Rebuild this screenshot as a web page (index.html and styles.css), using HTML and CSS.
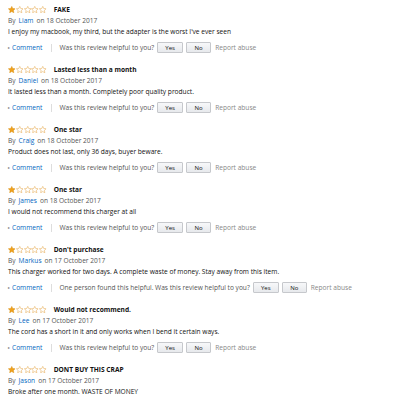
FILE: index.html
```html
<!DOCTYPE html>
<html>
<head>
<meta charset="utf-8">
<link rel="stylesheet" href="styles.css">
</head>
<body>
<svg width="0" height="0" class="defs">
  <defs>
    <symbol id="star" viewBox="0 0 20 20"><path d="M10 1l2.7 5.7 6.3.7-4.7 4.3 1.3 6.3L10 14.8 4.4 18l1.3-6.3L1 7.4l6.3-.7z"/></symbol>
  </defs>
</svg>

<div class="review">
  <div class="head"><span class="stars"><svg class="s full"><use href="#star"/></svg><svg class="s"><use href="#star"/></svg><svg class="s"><use href="#star"/></svg><svg class="s"><use href="#star"/></svg><svg class="s"><use href="#star"/></svg></span><span class="title">FAKE</span></div>
  <div class="by">By <a class="link">Liam</a> on 18 October 2017</div>
  <div class="text">I enjoy my macbook, my third, but the adapter is the worst I've ever seen</div>
  <div class="actions"><span class="arrow">▸</span><a class="link">Comment</a><span class="sep"></span><span class="q">Was this review helpful to you?</span><span class="btn">Yes</span><span class="btn">No</span><span class="abuse">Report abuse</span></div>
</div>

<div class="review">
  <div class="head"><span class="stars"><svg class="s full"><use href="#star"/></svg><svg class="s"><use href="#star"/></svg><svg class="s"><use href="#star"/></svg><svg class="s"><use href="#star"/></svg><svg class="s"><use href="#star"/></svg></span><span class="title">Lasted less than a month</span></div>
  <div class="by">By <a class="link">Daniel</a> on 18 October 2017</div>
  <div class="text">It lasted less than a month. Completely poor quality product.</div>
  <div class="actions"><span class="arrow">▸</span><a class="link">Comment</a><span class="sep"></span><span class="q">Was this review helpful to you?</span><span class="btn">Yes</span><span class="btn">No</span><span class="abuse">Report abuse</span></div>
</div>

<div class="review">
  <div class="head"><span class="stars"><svg class="s full"><use href="#star"/></svg><svg class="s"><use href="#star"/></svg><svg class="s"><use href="#star"/></svg><svg class="s"><use href="#star"/></svg><svg class="s"><use href="#star"/></svg></span><span class="title">One star</span></div>
  <div class="by">By <a class="link">Craig</a> on 18 October 2017</div>
  <div class="text">Product does not last, only 36 days, buyer beware.</div>
  <div class="actions"><span class="arrow">▸</span><a class="link">Comment</a><span class="sep"></span><span class="q">Was this review helpful to you?</span><span class="btn">Yes</span><span class="btn">No</span><span class="abuse">Report abuse</span></div>
</div>

<div class="review">
  <div class="head"><span class="stars"><svg class="s full"><use href="#star"/></svg><svg class="s"><use href="#star"/></svg><svg class="s"><use href="#star"/></svg><svg class="s"><use href="#star"/></svg><svg class="s"><use href="#star"/></svg></span><span class="title">One star</span></div>
  <div class="by">By <a class="link">James</a> on 18 October 2017</div>
  <div class="text">I would not recommend this charger at all</div>
  <div class="actions"><span class="arrow">▸</span><a class="link">Comment</a><span class="sep"></span><span class="q">Was this review helpful to you?</span><span class="btn">Yes</span><span class="btn">No</span><span class="abuse">Report abuse</span></div>
</div>

<div class="review">
  <div class="head"><span class="stars"><svg class="s full"><use href="#star"/></svg><svg class="s"><use href="#star"/></svg><svg class="s"><use href="#star"/></svg><svg class="s"><use href="#star"/></svg><svg class="s"><use href="#star"/></svg></span><span class="title">Don't purchase</span></div>
  <div class="by">By <a class="link">Markus</a> on 17 October 2017</div>
  <div class="text">This charger worked for two days. A complete waste of money. Stay away from this item.</div>
  <div class="actions"><span class="arrow">▸</span><a class="link">Comment</a><span class="sep"></span><span class="q">One person found this helpful. Was this review helpful to you?</span><span class="btn">Yes</span><span class="btn">No</span><span class="abuse">Report abuse</span></div>
</div>

<div class="review">
  <div class="head"><span class="stars"><svg class="s full"><use href="#star"/></svg><svg class="s"><use href="#star"/></svg><svg class="s"><use href="#star"/></svg><svg class="s"><use href="#star"/></svg><svg class="s"><use href="#star"/></svg></span><span class="title">Would not recommend.</span></div>
  <div class="by">By <a class="link">Lee</a> on 17 October 2017</div>
  <div class="text">The cord has a short in it and only works when I bend it certain ways.</div>
  <div class="actions"><span class="arrow">▸</span><a class="link">Comment</a><span class="sep"></span><span class="q">Was this review helpful to you?</span><span class="btn">Yes</span><span class="btn">No</span><span class="abuse">Report abuse</span></div>
</div>

<div class="review">
  <div class="head"><span class="stars"><svg class="s full"><use href="#star"/></svg><svg class="s"><use href="#star"/></svg><svg class="s"><use href="#star"/></svg><svg class="s"><use href="#star"/></svg><svg class="s"><use href="#star"/></svg></span><span class="title">DONT BUY THIS CRAP</span></div>
  <div class="by">By <a class="link">Jason</a> on 17 October 2017</div>
  <div class="text">Broke after one month. WASTE OF MONEY</div>
</div>
</body>
</html>
```

FILE: styles.css
```css
html, body {
  margin: 0;
  padding: 0;
  background: #fff;
}
body {
  padding: 4px 0 0 8px;
  font-family: "Open Sans", "Noto Sans", sans-serif;
  font-size: 6.6px;
  color: #111;
  overflow: hidden;
  height: 396px;
}
.defs { position: absolute; }
.review {
  display: flex;
  flex-direction: column;
  margin-bottom: 11px;
}
.head, .by, .text {
  height: 11px;
  line-height: 11px;
  display: flex;
  align-items: center;
  white-space: nowrap;
}
.stars {
  display: flex;
  gap: 0.3px;
  margin-right: 7px;
}
.s {
  width: 7.5px;
  height: 7.5px;
  fill: #fff;
  stroke: #e3a03c;
  stroke-width: 1.3;
}
.s.full {
  fill: #f0a11b;
  stroke: #d88e10;
}
.title {
  font-weight: 700;
  color: #111;
}
.by {
  color: #555;
}
.link {
  color: #0066c0;
  margin: 0 2px;
}
.by .link { margin: 0 3px; }
.text { color: #111; }
.actions {
  margin-top: 5px;
  height: 11px;
  display: flex;
  align-items: center;
  white-space: nowrap;
  color: #555;
}
.arrow {
  font-size: 4px;
  color: #777;
  margin-right: 2px;
}
.actions .link { margin: 0; }
.sep {
  width: 1px;
  height: 8px;
  background: #ddd;
  margin: 0 7px 0 9px;
}
.btn {
  height: 11px;
  box-sizing: border-box;
  border: 1px solid #c6c8cc;
  border-radius: 1px;
  background: linear-gradient(#f7f8fa, #e7e9ec);
  color: #111;
  display: flex;
  align-items: center;
  justify-content: center;
  width: 26px;
  margin-left: 3px;
  font-size: 6px;
}
.btn + .btn { width: 25px; }
.abuse {
  color: #888;
  margin-left: 4px;
}
```
